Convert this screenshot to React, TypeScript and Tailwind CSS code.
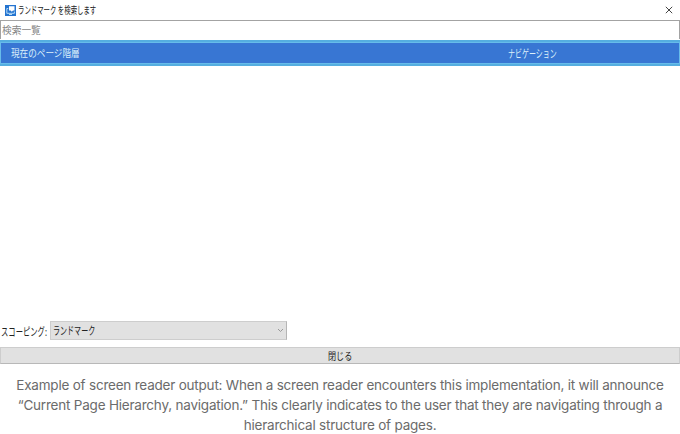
import type { ReactNode } from "react";

function Jp({ className, children }: { className: string; children: ReactNode }) {
  return (
    <span
      className={`block origin-left whitespace-nowrap font-['Noto_Sans_CJK_JP','Liberation_Sans',sans-serif] ${className}`}
    >
      {children}
    </span>
  );
}

function AppIcon() {
  return (
    <svg className="h-[11px] w-[11px]" viewBox="0 0 11 11">
      <rect width="11" height="11" fill="#2474d0" />
      <path d="M4 1.2h5.5v4.3H8L6.8 6.8 5.6 5.5H4z" fill="#fff" />
      <path d="M3.2 3.5H1.8v4.8h7.6V6.5M4 9.5h3" fill="none" stroke="#b5daf5" strokeWidth="1" />
    </svg>
  );
}

export default function App() {
  return (
    <div className="flex h-[434px] w-[680px] flex-col overflow-hidden bg-white text-[#222]">
      <header className="flex h-5 shrink-0 items-center justify-between pl-[5px] pr-[7px]">
        <div className="flex items-center gap-[2px]">
          <AppIcon />
          <Jp className="scale-x-[0.64] text-[10px] leading-5">ランドマーク を検索します</Jp>
        </div>
        <svg className="h-2 w-2" viewBox="0 0 8 8" fill="none" stroke="#444" strokeWidth="1">
          <path d="M.8.8l6.4 6.4M7.2.8L.8 7.2" />
        </svg>
      </header>
      <div className="mb-px flex h-[19px] shrink-0 items-center border border-b-0 border-[#a3a3a3] pb-[1px] pl-[1px]">
        <Jp className="scale-x-[0.97] text-[10px] leading-4 text-[#858585]">検索一覧</Jp>
      </div>
      <div className="h-[26px] shrink-0 border-y-2 border-[#55aee0]">
        <div className="flex h-full items-center border border-[#67bcea] bg-[#3876d3] pl-[10px] text-[#dcf0fa]">
          <div className="w-[497px]">
            <Jp className="scale-x-[0.86] text-[10px] leading-5">現在のページ階層</Jp>
          </div>
          <Jp className="scale-x-[0.635] text-[11px] leading-5">ナビゲーション</Jp>
        </div>
      </div>
      <main className="flex-1" />
      <div className="flex h-[19px] shrink-0 items-center pl-[1px]">
        <div className="w-[49px]">
          <Jp className="scale-x-[0.665] text-[11px] leading-[18px]">スコーピング:</Jp>
        </div>
        <div className="flex h-[19px] w-[237px] items-center justify-between border border-[#cdcdcd] border-r-[#b5b5b5] bg-[#e1e1e1] pl-[2px] pr-[2px]">
          <Jp className="scale-x-[0.64] text-[11px] leading-[17px]">ランドマーク</Jp>
          <svg className="h-[5px] w-[7px]" viewBox="0 0 7 5" fill="none" stroke="#999">
            <path d="M1 1l2.5 2.5L6 1" />
          </svg>
        </div>
      </div>
      <button className="mt-[7px] flex h-[17px] w-full shrink-0 items-center border border-[#cdcdcd] border-b-[#b8b8b8] bg-[#e1e1e1] pl-[327px]">
        <Jp className="scale-x-[0.81] text-[10px] leading-[15px]">閉じる</Jp>
      </button>
      <p className="mt-[11px] h-[59px] shrink-0 whitespace-nowrap text-center font-['Inter','Liberation_Sans',sans-serif] text-[13.5px] leading-5 tracking-[-0.21px] text-[#6b6b6b]">
        <span className="block">Example of screen reader output: When a screen reader encounters this implementation, it will announce</span>
        <span className="block">“Current Page Hierarchy, navigation.” This clearly indicates to the user that they are navigating through a</span>
        <span className="block">hierarchical structure of pages.</span>
      </p>
    </div>
  );
}
